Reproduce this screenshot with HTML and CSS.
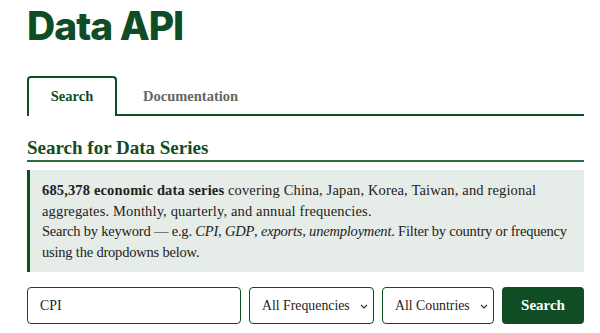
FILE: index.html
```html
<!DOCTYPE html>
<html lang="en">
<head>
    <meta charset="UTF-8">
    <title>Data API</title>
    <link rel="stylesheet" href="styles.css">
</head>
<body>
    <div class="page">
        <h1 class="title">Data API</h1>

        <div class="tabs">
            <a class="tab active" href="#">Search</a>
            <a class="tab" href="#">Documentation</a>
        </div>

        <h2 class="section-title">Search for Data Series</h2>

        <div class="info">
            <p class="lead"><strong>685,378 economic data series</strong> covering China, Japan, Korea, Taiwan, and regional<br>aggregates. Monthly, quarterly, and annual frequencies.</p>
            <p class="hint">Search by keyword — e.g. <em>CPI</em>, <em>GDP</em>, <em>exports</em>, <em>unemployment</em>. Filter by country or frequency<br>using the dropdowns below.</p>
        </div>

        <form class="search-row" onsubmit="return false">
            <input class="field query" type="text" value="CPI">
            <div class="select-wrap freq">
                <select class="field">
                    <option>All Frequencies</option>
                    <option>Monthly</option>
                    <option>Quarterly</option>
                    <option>Annual</option>
                </select>
                <svg class="chev" width="8" height="5" viewBox="0 0 8 5"><path d="M1 1l3 3 3-3" fill="none" stroke="#333" stroke-width="1.2"/></svg>
            </div>
            <div class="select-wrap country">
                <select class="field">
                    <option>All Countries</option>
                    <option>China</option>
                    <option>Japan</option>
                    <option>Korea</option>
                    <option>Taiwan</option>
                </select>
                <svg class="chev" width="8" height="5" viewBox="0 0 8 5"><path d="M1 1l3 3 3-3" fill="none" stroke="#333" stroke-width="1.2"/></svg>
            </div>
            <button class="btn" type="submit">Search</button>
        </form>
    </div>
</body>
</html>
```

FILE: styles.css
```css
*{
    padding:0;
    margin:0;
    box-sizing:border-box;
}
html,body{
    background:#fff;
    color:#222;
    font-family:"Liberation Serif",Georgia,serif;
}
.page{
    padding:0 16px 0 27px;
}
.title{
    font-family:Inter,"Liberation Sans",sans-serif;
    font-size:39px;
    font-weight:800;
    letter-spacing:-1px;
    color:#104d24;
    line-height:50px;
    padding-top:1px;
}
.tabs{
    display:flex;
    margin-top:25px;
    border-bottom:2px solid #104d24;
}
.tab{
    display:block;
    height:38px;
    line-height:36px;
    font-size:14.5px;
    font-weight:bold;
    text-decoration:none;
    color:#666;
    padding:0 24px;
    margin-bottom:-2px;
    border:2px solid transparent;
    border-bottom:none;
    border-radius:4px 4px 0 0;
}
.tab.active{
    width:90px;
    padding:0;
    text-align:center;
    color:#104d24;
    border-color:#104d24;
    background:#fff;
    height:40px;
}
.section-title{
    font-size:19px;
    font-weight:bold;
    color:#104d24;
    margin-top:21px;
    line-height:22px;
    padding-bottom:1px;
    border-bottom:2px solid #2e6a3f;
}
.info{
    margin-top:8px;
    background:#e6ece8;
    border-left:3px solid #104d24;
    padding:10px 0 11px 12px;
    font-size:14.5px;
    line-height:20.5px;
    height:102px;
    white-space:nowrap;
}
.lead{
    letter-spacing:0.15px;
}
.hint{
    letter-spacing:-0.2px;
}
.search-row{
    display:flex;
    gap:8px;
    margin-top:15px;
    height:37px;
}
.field{
    height:37px;
    border:1.5px solid #104d24;
    border-radius:4px;
    background:#fff;
    font-family:inherit;
    font-size:13.8px;
    color:#222;
}
.query{
    width:214px;
    padding:0 12px;
}
.select-wrap{
    position:relative;
}
.select-wrap select{
    width:100%;
    padding:0 12px;
    appearance:none;
    -webkit-appearance:none;
}
.chev{
    position:absolute;
    right:6px;
    top:17px;
    pointer-events:none;
}
.freq{ width:125px; }
.country{ width:112px; }
.btn{
    flex:1;
    border:none;
    border-radius:4px;
    background:#104d24;
    color:#fff;
    font-family:inherit;
    font-size:15px;
    font-weight:bold;
}
```
